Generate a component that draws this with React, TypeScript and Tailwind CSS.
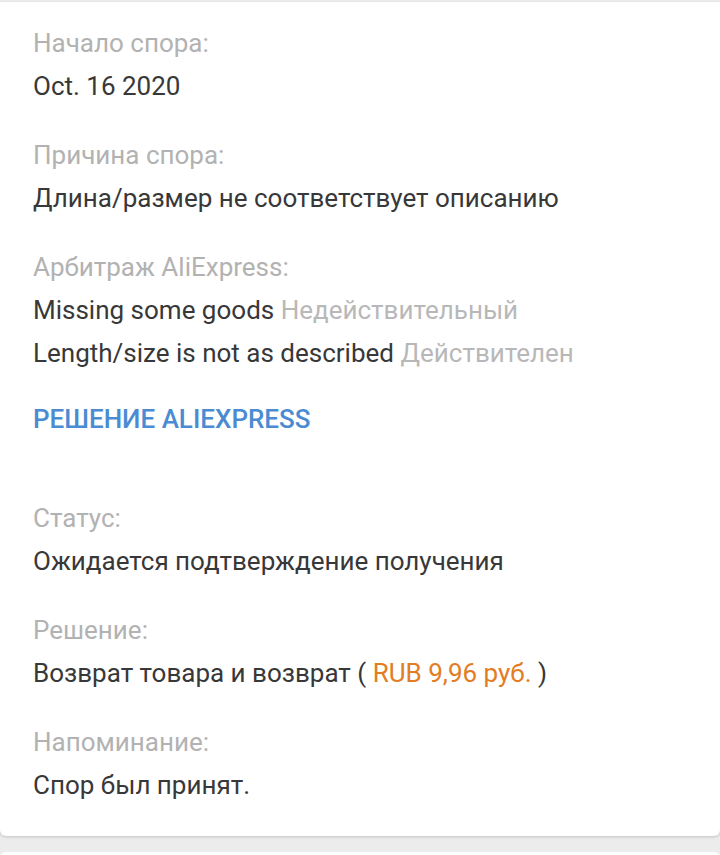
import React from 'react';

// Dispute details card
type Row = { label: string; value: React.ReactNode };

const top: Row[] = [
  { label: 'Начало спора:', value: 'Oct. 16 2020' },
  { label: 'Причина спора:', value: 'Длина/размер не соответствует описанию' },
];

const decision: Row[] = [
  { label: 'Статус:', value: 'Ожидается подтверждение получения' },
  {
    label: 'Решение:',
    value: (
      <>
        Возврат товара и возврат ( <span className="text-[#e27d23]">RUB 9,96 руб.</span> )
      </>
    ),
  },
  { label: 'Напоминание:', value: 'Спор был принят.' },
];

function Section({ row }: { row: Row }) {
  return (
    <div className="flex flex-col">
      <div className="text-[#b2b2b2]">{row.label}</div>
      <div className="text-[#383838]">{row.value}</div>
    </div>
  );
}

export default function App() {
  return (
    <div
      className="min-h-[855px] bg-[#ececec] pt-[2px] text-[26px] leading-[43px]"
      style={{ fontFamily: 'Roboto, "Noto Sans", sans-serif' }}
    >
      <div className="rounded-b-[6px] bg-white px-[33px] pt-[19.5px] pb-[29px] shadow-[0_1px_3px_rgba(0,0,0,0.18)]">
        <div className="flex flex-col gap-[26px]">
          {top.map((r) => (
            <Section key={r.label} row={r} />
          ))}
          <div className="flex flex-col">
            <div className="text-[#b2b2b2]">Арбитраж AliExpress:</div>
            <div className="text-[#383838]">
              Missing some goods <span className="text-[#b8b8b8]">Недействительный</span>
            </div>
            <div className="text-[#383838]">
              Length/size is not as described <span className="text-[#b8b8b8]">Действителен</span>
            </div>
          </div>
        </div>
        <div className="mt-[23px] font-medium text-[#4a8bd2]">РЕШЕНИЕ ALIEXPRESS</div>
        <div className="mt-[56px] flex flex-col gap-[26px]">
          {decision.map((r) => (
            <Section key={r.label} row={r} />
          ))}
        </div>
      </div>
      <div className="mt-[16px] h-[10px] rounded-t-[6px] bg-white" />
    </div>
  );
}
